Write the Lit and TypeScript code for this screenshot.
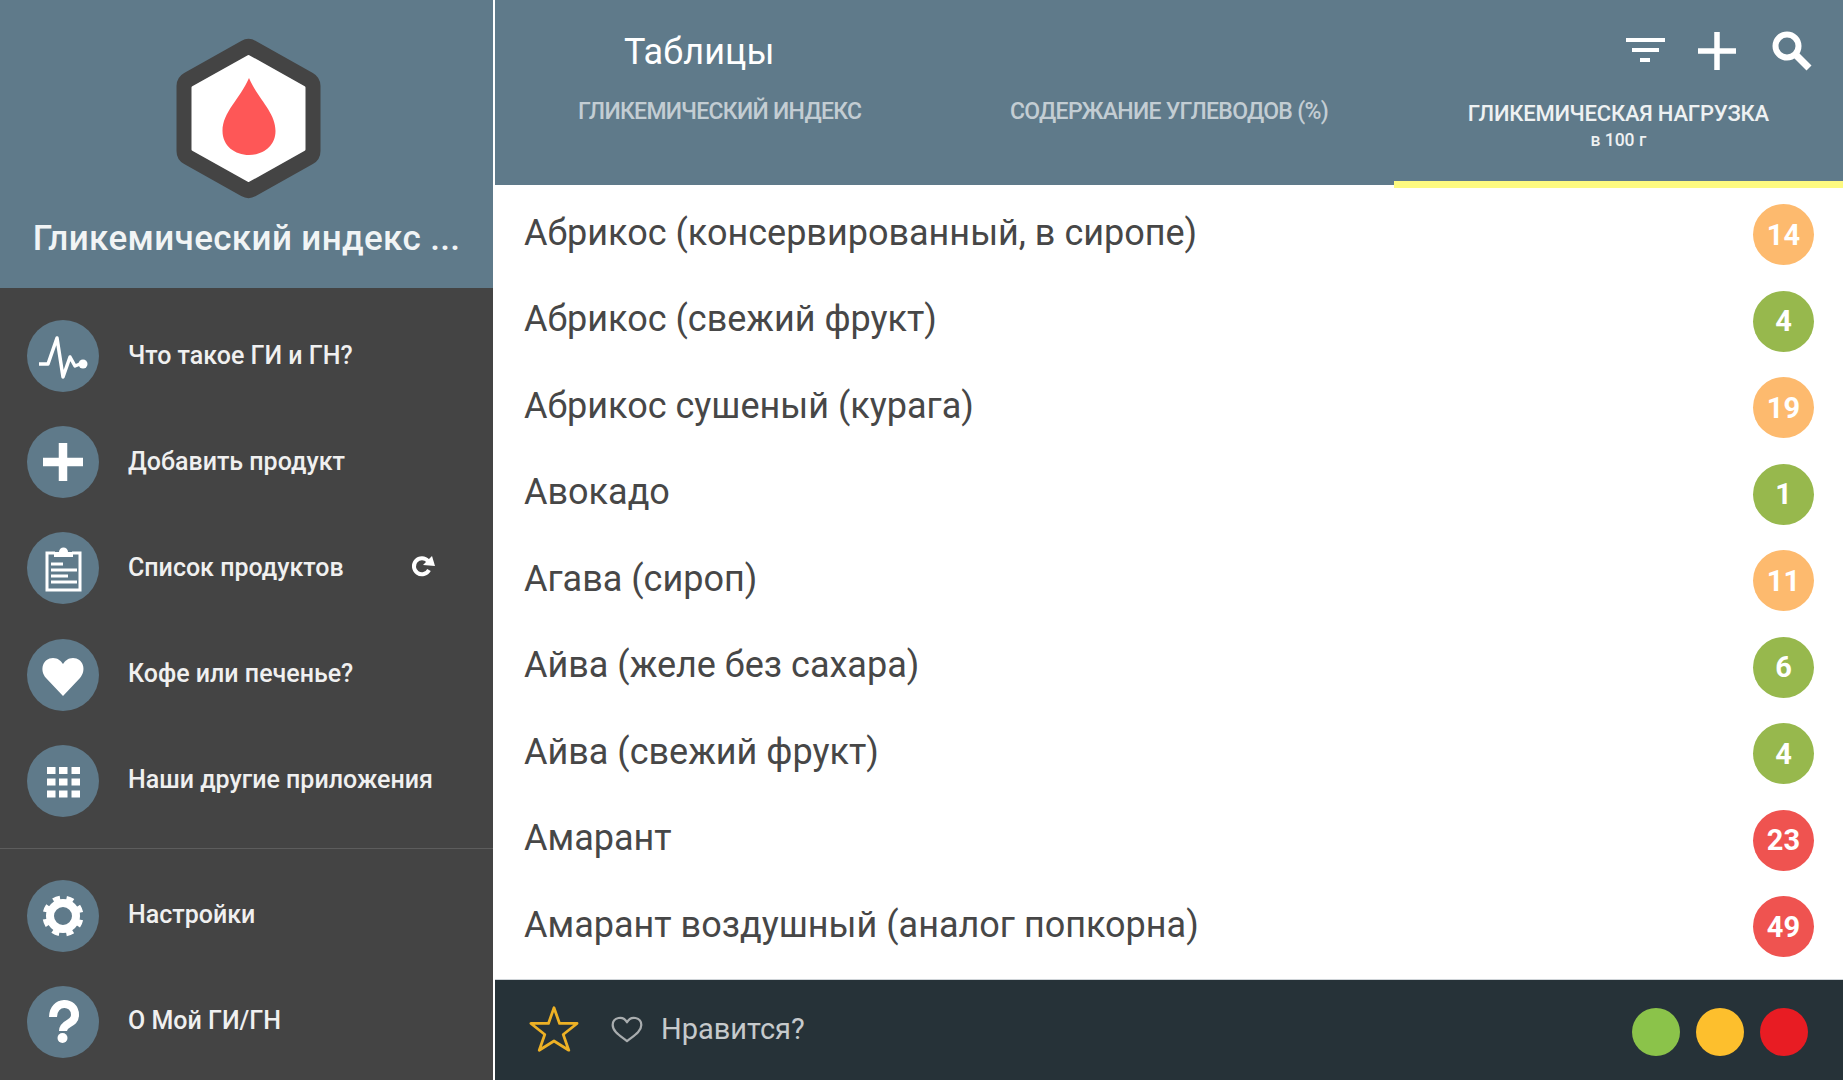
import { LitElement, html, css, svg } from "lit";
import { customElement } from "lit/decorators.js";

const rows: [string, number, string][] = [
  ["Абрикос (консервированный, в сиропе)", 14, "o"],
  ["Абрикос (свежий фрукт)", 4, "g"],
  ["Абрикос сушеный (курага)", 19, "o"],
  ["Авокадо", 1, "g"],
  ["Агава (сироп)", 11, "o"],
  ["Айва (желе без сахара)", 6, "g"],
  ["Айва (свежий фрукт)", 4, "g"],
  ["Амарант", 23, "r"],
  ["Амарант воздушный (аналог попкорна)", 49, "r"],
];

const W = "#fff";
const icons: Record<string, unknown> = {
  pulse: svg`<path d="M12 44H21L30 18L36 57L43 37L48 46L53 44" fill="none" stroke=${W} stroke-width="3.500" stroke-linejoin="round"/><circle cx="56" cy="44" r="4.500" fill=${W}/>`,
  plus: svg`<path d="M36 17V55M16 36H56" fill="none" stroke=${W} stroke-width="8.500"/>`,
  list: svg`<path d="M28 21H20V58H53V21H45" fill="none" stroke=${W} stroke-width="3"/><path d="M27 25V20H32A4.500 4.500 0 0 1 41 20H46V25Z" fill=${W}/><path d="M24 32H36M24 38H50M24 44H41M24 50H50" fill="none" stroke=${W} stroke-width="3"/>`,
  heart: svg`<path d="M36 57L19 39C12 31 16 19 26 19C31 19 34 22 36 25C38 22 41 19 46 19C56 19 60 31 53 39Z" fill=${W}/>`,
  grid: svg`<path d="M20 22h8.500v7h-8.500zM32 22h8.500v7h-8.500zM44.500 22h8.500v7h-8.500zM20 33.500h8.500v7h-8.500zM32 33.500h8.500v7h-8.500zM44.500 33.500h8.500v7h-8.500zM20 45.500h8.500v7h-8.500zM32 45.500h8.500v7h-8.500zM44.500 45.500h8.500v7h-8.500z" fill=${W}/>`,
  gear: svg`<circle cx="36" cy="36" r="13" fill="none" stroke=${W} stroke-width="8"/><circle cx="36" cy="36" r="18" fill="none" stroke=${W} stroke-width="5" stroke-dasharray="7 7.137" transform="rotate(-78.900 36 36)"/>`,
  help: svg`<path d="M26 31C26 14 48 14 48 29C48 39 36 36 36 45" fill="none" stroke=${W} stroke-width="8"/><circle cx="35.500" cy="52" r="5" fill=${W}/>`,
};

@customElement("app-root")
export class AppRoot extends LitElement {
  static styles = css`
    :host { display: block; width: 1843px; height: 1080px; overflow: hidden; background: #fff; font-family: Roboto, "Noto Sans", sans-serif; }
    .app { display: flex; height: 1080px; }
    .side { width: 493px; flex: none; background: #444; display: flex; flex-direction: column; }
    .brand { height: 288px; background: #5f7a8a; display: flex; flex-direction: column; align-items: center; padding-top: 37px; box-sizing: border-box; }
    .logo { display: block; width: 150px; height: 164px; }
    .brand-title { margin-top: 17px; font-size: 35px; font-weight: 500; line-height: 42px; color: #f1f4f5; white-space: nowrap; letter-spacing: 0.35px; }
    .menu { padding: 32px 0 0 27px; display: flex; flex-direction: column; gap: 34.200px; }
    .menu.two { padding-top: 31px; gap: 34px; border-top: 1px solid #5d5d5d; margin-top: 31px; }
    .item { display: flex; align-items: center; gap: 29px; height: 72px; color: #f0f0f0; font-size: 25px; font-weight: 500; }
    .item svg { width: 72px; height: 72px; flex: none; }
    .item .label { margin-top: -2px; }
    .item .refresh { width: 28px; height: 28px; margin-left: 35px; margin-top: -4px; }
    .main { flex: 1; margin-left: 2px; display: flex; flex-direction: column; min-width: 0; }
    .top { height: 185px; flex: none; background: #5f7a8a; }
    .bar { height: 100px; display: flex; align-items: flex-start; box-sizing: border-box; padding: 30px 0 0 129px; }
    .title { flex: 1; font-size: 36px; line-height: 44px; color: #fff; letter-spacing: 0.1px; }
    .tools { display: flex; align-items: center; margin-right: 30px; margin-top: -1px; }
    .tools svg { display: block; }
    .tools .t-plus { margin-left: 30px; }
    .tools .t-search { margin-left: 34px; }
    .tabs { display: grid; grid-template-columns: repeat(3, 1fr); height: 87px; margin-top: -1px; }
    .tab { text-align: center; color: #c3cdd3; font-size: 23px; font-weight: 500; line-height: 26px; letter-spacing: -0.7px; }
    .tab.on { color: #eef1f2; font-size: 22px; letter-spacing: -0.2px; padding-top: 2px; position: relative; }
    .tab.on::after { content: ""; position: absolute; left: 0; right: 0; bottom: -2px; height: 7px; background: #fdfa80; }
    .tab small { display: block; font-size: 17.500px; line-height: 26px; font-weight: 500; letter-spacing: 0; }
    .list { flex: 1; min-height: 0; padding: 6.500px 29px 0 29px; }
    .row { height: 86.500px; display: flex; align-items: center; justify-content: space-between; }
    .name { font-size: 36px; color: #474747; margin-top: -4px; }
    .badge { width: 61px; height: 61px; border-radius: 50%; display: flex; align-items: center; justify-content: center; color: #fff; font-size: 29px; font-weight: 700; flex: none; }
    .o { background: #fdba6e; } .g { background: #97b84d; } .r { background: #ef5350; }
    .foot { height: 101px; flex: none; border-top: 1px solid #cfd4d8; box-sizing: border-box; background: #263238; display: flex; align-items: center; padding: 0 35px 0 34px; }
    .foot .star { width: 50px; height: 48px; display: block; margin-top: -2px; }
    .foot .hrt { width: 34px; height: 27px; display: block; margin-left: 31px; margin-top: -1px; }
    .foot .txt { color: #c6cacc; font-size: 29px; flex: 1; margin-left: 17px; margin-top: -2px; }
    .dots { display: flex; gap: 16px; margin-top: 4px; }
    .dot { width: 48px; height: 48px; border-radius: 50%; }
    .d1 { background: #8bc34a; } .d2 { background: #fdbf2d; } .d3 { background: #e81c23; }
  `;

  private menuItem(icon: string, label: string, refresh = false) {
    return html`<div class="item">
      <svg viewBox="0 0 72 72"><circle cx="36" cy="36" r="36" fill="#5f7a8a"/>${icons[icon]}</svg>
      <span class="label">${label}</span>
      ${refresh
        ? html`<svg class="refresh" viewBox="0 0 28 28"><path d="M20 9A8 8 0 1 0 21 18" fill="none" stroke="#fff" stroke-width="4"/><path d="M15 13L27 14L24 4Z" fill="#fff"/></svg>`
        : ""}
    </div>`;
  }

  render() {
    return html`<div class="app">
      <aside class="side">
        <div class="brand">
          <svg class="logo" viewBox="0 0 150 164">
            <path d="M76.500 17L133.500 49V114L76.500 146L19.500 114V49Z" fill="#444" stroke="#444" stroke-width="30" stroke-linejoin="round"/>
            <path d="M76.500 19.500L132 50.500V112.500L76.500 143.500L21 112.500V50.500Z" fill="#fff" stroke="#fff" stroke-width="3" stroke-linejoin="round"/>
            <path d="M77 41C86 62 103.500 75 103.500 94C103.500 109 91 118 77 118C63 118 50.500 109 50.500 94C50.500 75 68 62 77 41Z" fill="#fe5757"/>
          </svg>
          <div class="brand-title">Гликемический индекс ...</div>
        </div>
        <div class="menu">
          ${this.menuItem("pulse", "Что такое ГИ и ГН?")}
          ${this.menuItem("plus", "Добавить продукт")}
          ${this.menuItem("list", "Список продуктов", true)}
          ${this.menuItem("heart", "Кофе или печенье?")}
          ${this.menuItem("grid", "Наши другие приложения")}
        </div>
        <div class="menu two">
          ${this.menuItem("gear", "Настройки")}
          ${this.menuItem("help", "О Мой ГИ/ГН")}
        </div>
      </aside>
      <section class="main">
        <header class="top">
          <div class="bar">
            <div class="title">Таблицы</div>
            <div class="tools">
              <svg width="44" height="44" viewBox="0 0 44 44"><path d="M3 11H42M9 21H36M17 31H27" stroke="#fff" stroke-width="4" fill="none"/></svg>
              <svg class="t-plus" width="40" height="40" viewBox="0 0 40 40"><path d="M20 1V39M1 20H39" stroke="#fff" stroke-width="5.500" fill="none"/></svg>
              <svg class="t-search" width="42" height="42" viewBox="0 0 42 42"><circle cx="16" cy="16" r="11.500" fill="none" stroke="#fff" stroke-width="6"/><path d="M24 24L38 38" stroke="#fff" stroke-width="7" fill="none"/></svg>
            </div>
          </div>
          <div class="tabs">
            <div class="tab">ГЛИКЕМИЧЕСКИЙ ИНДЕКС</div>
            <div class="tab">СОДЕРЖАНИЕ УГЛЕВОДОВ (%)</div>
            <div class="tab on">ГЛИКЕМИЧЕСКАЯ НАГРУЗКА<small>в 100 г</small></div>
          </div>
        </header>
        <div class="list">
          ${rows.map(([n, v, c]) => html`<div class="row"><span class="name">${n}</span><span class="badge ${c}">${v}</span></div>`)}
        </div>
        <footer class="foot">
          <svg class="star" viewBox="0 0 54 52"><path d="M27 3L33 20L52 20L37 32L43 49L27 39L11 49L17 32L2 20L21 20Z" fill="none" stroke="#edb125" stroke-width="3" stroke-linejoin="round"/></svg>
          <svg class="hrt" viewBox="0 0 38 30"><path d="M19 28C13 23 3 18 3 10C3 1 15 -1 19 7C23 -1 35 1 35 10C35 18 25 23 19 28Z" fill="none" stroke="#a9adaf" stroke-width="2.500" stroke-linejoin="round"/></svg>
          <span class="txt">Нравится?</span>
          <div class="dots">
            <div class="dot d1"></div>
            <div class="dot d2"></div>
            <div class="dot d3"></div>
          </div>
        </footer>
      </section>
    </div>`;
  }
}
